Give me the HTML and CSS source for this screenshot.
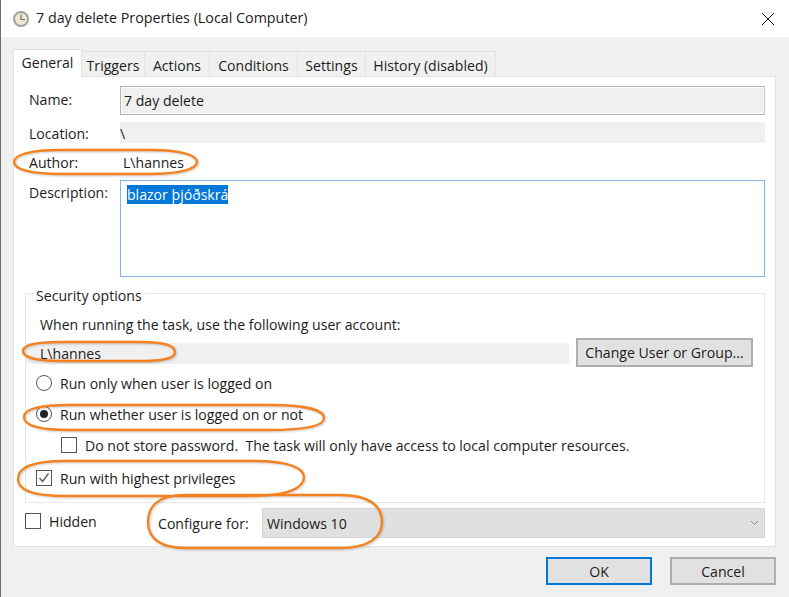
FILE: index.html
```html
<!DOCTYPE html>
<html lang="en">
<head>
    <meta charset="UTF-8">
    <meta name="viewport" content="width=device-width, initial-scale=1.0">
    <title>7 day delete Properties (Local Computer)</title>
    <link rel="stylesheet" href="styles.css">
</head>
<body>
    <div class="window">
        <div class="titlebar">
            <svg class="clock" width="18" height="18" viewBox="0 0 18 18">
                <circle cx="9" cy="9" r="7" fill="#efe8d0" stroke="#9da3a6" stroke-width="2"/>
                <path d="M9 4.5V9.5H13" fill="none" stroke="#6f7370" stroke-width="1.2"/>
            </svg>
            <span class="title">7 day delete Properties (Local Computer)</span>
            <svg class="close" width="14" height="14" viewBox="0 0 14 14">
                <path d="M1 1L13 13M13 1L1 13" stroke="#111" stroke-width="1" fill="none"/>
            </svg>
        </div>

        <div class="tabs">
            <div class="tab active">General</div>
            <div class="tab tab-triggers">Triggers</div>
            <div class="tab tab-actions">Actions</div>
            <div class="tab tab-conditions">Conditions</div>
            <div class="tab tab-settings">Settings</div>
            <div class="tab tab-history">History (disabled)</div>
        </div>

        <div class="panel">
            <div class="row row-name">
                <span class="label">Name:</span>
                <div class="name-input">7 day delete</div>
            </div>
            <div class="row row-location">
                <span class="label">Location:</span>
                <div class="readonly">\</div>
            </div>
            <div class="row row-author">
                <span class="label">Author:</span>
                <div class="author-value">L\hannes</div>
            </div>
            <div class="row row-description">
                <span class="label">Description:</span>
                <div class="textarea"><span class="selected">blazor þjóðskrá</span></div>
            </div>

            <fieldset class="security">
                <legend>Security options</legend>
                <div class="account-label">When running the task, use the following user account:</div>
                <div class="account-row">
                    <div class="account-field">L\hannes</div>
                    <div class="button change-user">Change User or Group...</div>
                </div>
                <div class="option option-first"><span class="radio"></span>Run only when user is logged on</div>
                <div class="option option-whether"><span class="radio checked"></span>Run whether user is logged on or not</div>
                <div class="option option-store"><span class="checkbox"></span>Do not store password.&nbsp; The task will only have access to local computer resources.</div>
                <div class="option option-highest">
                    <span class="checkbox">
                        <svg width="14" height="14" viewBox="0 0 14 14"><path d="M2.5 7L5.5 10.5L11.5 2.5" fill="none" stroke="#666" stroke-width="1.5"/></svg>
                    </span>Run with highest privileges
                </div>
            </fieldset>

            <div class="bottom-row">
                <div class="option hidden-option"><span class="checkbox"></span>Hidden</div>
                <span class="configure-label">Configure for:</span>
                <div class="select">
                    <span>Windows 10</span>
                    <svg width="9" height="6" viewBox="0 0 9 6"><path d="M1 1L4.5 4.5L8 1" fill="none" stroke="#8a8a8a" stroke-width="1"/></svg>
                </div>
            </div>
        </div>

        <div class="actions">
            <div class="button dialog-button default">OK</div>
            <div class="button dialog-button">Cancel</div>
        </div>

        <!-- orange marks drawn over the screenshot -->
        <svg class="marks" width="789" height="597" viewBox="0 0 789 597">
            <path d="M14 162C14 155 30 150 60 150H150C180 150 197 155 197 162C197 169 180 174 150 174H60C30 174 14 169 14 162Z"/>
            <path d="M23 351C23 345 35 342 60 342H140C165 342 175 346 175 352C175 358 165 361 140 361H60C35 361 23 357 23 351Z"/>
            <path d="M24 417C24 409 38 405 70 405H270C305 405 324 410 324 418C324 426 305 430 270 430H70C38 430 24 425 24 417Z"/>
            <path d="M18 479C18 468 32 461 65 461H255C288 461 304 468 304 477C304 488 288 496 250 496H65C32 496 18 490 18 479Z"/>
            <path d="M148 522C148 505 160 495 185 495H340C368 495 382 505 382 522C382 538 368 548 340 548H185C160 548 148 538 148 522Z"/>
        </svg>
    </div>
</body>
</html>
```

FILE: styles.css
```css
* {
    box-sizing: border-box;
}
body {
    margin: 0;
    font-family: "Open Sans", "Noto Sans", sans-serif;
    font-size: 14.1px;
    color: #1c1c1c;
    background: #f0f0f0;
}
.window {
    position: relative;
    width: 789px;
    height: 597px;
    overflow: hidden;
    border-left: 1px solid #6d6d6d;
    background: #f0f0f0;
}
.titlebar {
    display: flex;
    align-items: center;
    height: 37px;
    padding: 0 14px 0 11px;
    background: #fff;
}
.clock {
    margin-right: 6px;
}
.title {
    flex: 1;
    padding-bottom: 2px;
    font-size: 14.3px;
}
.tabs {
    display: flex;
    align-items: flex-end;
    height: 39px;
    padding: 0 0 0 12px;
}
.tab {
    height: 25px;
    padding: 4px 0 0;
    text-align: center;
    background: #f0f0f0;
    border: 1px solid #e3e3e3;
    border-bottom: none;
    border-left: none;
}
.tab.active {
    width: 69px;
    height: 28px;
    margin-bottom: -1px;
    padding-top: 3px;
    background: #fff;
    border-left: 1px solid #e3e3e3;
    position: relative;
    z-index: 1;
}
.tab-triggers { width: 63px; }
.tab-actions { width: 65px; }
.tab-conditions { width: 88px; }
.tab-settings { width: 68px; }
.tab-history { width: 130px; }
.panel {
    width: 763px;
    height: 471px;
    margin-left: 12px;
    padding: 9px 10px 0 11px;
    background: #fff;
    border: 1px solid #e3e3e3;
}
.row {
    display: flex;
    align-items: flex-start;
}
.label {
    width: 95px;
    padding-left: 4px;
    flex: none;
}
.row-name {
    height: 29px;
}
.row-name .label {
    padding-top: 4px;
}
.name-input {
    flex: 1;
    height: 29px;
    padding: 4px 3px 0;
    background: #f0f0f0;
    border: 1px solid #b5b5b5;
    border-right-color: #c4c4c4;
    box-shadow: inset 0 0 0 1px #fafafa;
}
.row-location {
    height: 21px;
    margin-top: 7px;
}
.row-location .label,
.readonly {
    padding-top: 2px;
}
.readonly {
    flex: 1;
    height: 21px;
    background: #f0f0f0;
}
.row-author {
    height: 21px;
    margin-top: 8px;
}
.row-author .label,
.author-value {
    padding-top: 2px;
}
.author-value {
    padding-left: 3px;
}
.row-description {
    height: 97px;
    margin-top: 8px;
}
.row-description .label {
    padding-top: 3px;
}
.textarea {
    flex: 1;
    height: 97px;
    padding: 4px 6px;
    background: #fff;
    border: 1px solid #7eb4ea;
}
.selected {
    background: #0078d7;
    color: #fff;
}
.security {
    height: 221px;
    margin: 5px 0 0;
    padding: 0;
    border: 1px solid #e8e8e8;
    min-width: 0;
}
.security legend {
    margin-left: 7px;
    padding: 4px 3px 0;
}
.account-label {
    margin: 10px 0 0 14px;
}
.account-row {
    display: flex;
    align-items: center;
    height: 29px;
    margin-top: 4px;
}
.account-field {
    width: 543px;
    height: 21px;
    margin-top: 2px;
    padding: 1px 0 0 14px;
    background: #f0f0f0;
}
.button {
    display: flex;
    align-items: center;
    justify-content: center;
    background: #e1e1e1;
    border: 2px solid #adadad;
}
.change-user {
    width: 177px;
    height: 29px;
    margin-left: 7px;
}
.option {
    display: flex;
    align-items: center;
    height: 20px;
}
.option-first {
    margin: 6px 0 0 10px;
}
.option-whether {
    margin: 11px 0 0 10px;
}
.option-store {
    margin: 11px 0 0 35px;
}
.option-highest {
    margin: 13px 0 0 10px;
}
.radio {
    position: relative;
    width: 16px;
    height: 16px;
    margin-right: 8px;
    flex: none;
    background: #fff;
    border: 1px solid #555;
    border-radius: 50%;
}
.radio.checked::after {
    content: "";
    position: absolute;
    top: 3px;
    left: 3px;
    width: 8px;
    height: 8px;
    border-radius: 50%;
    background: #222;
}
.checkbox {
    display: block;
    width: 16px;
    height: 16px;
    margin-right: 8px;
    flex: none;
    background: #fff;
    border: 1px solid #555;
}
.checkbox svg {
    display: block;
}
.bottom-row {
    display: flex;
    align-items: center;
    height: 30px;
    margin-top: 5px;
}
.hidden-option {
    width: 133px;
    margin-bottom: 4px;
}
.configure-label {
    width: 104px;
    flex: none;
}
.select {
    display: flex;
    align-items: center;
    justify-content: space-between;
    flex: 1;
    height: 30px;
    padding: 0 5px 0 4px;
    background: #e0e0e0;
    border: 1px solid #d5d5d5;
}
.actions {
    display: flex;
    justify-content: flex-end;
    gap: 18px;
    width: 775px;
    margin-top: 10px;
}
.dialog-button {
    width: 106px;
    height: 28px;
}
.dialog-button.default {
    border-color: #0078d7;
}
.marks {
    position: absolute;
    top: 0;
    left: -1px;
    pointer-events: none;
    filter: drop-shadow(1px 1px 1px rgba(0, 0, 0, 0.2));
}
.marks path {
    fill: none;
    stroke: #f5821f;
    stroke-width: 2.4;
}
```
